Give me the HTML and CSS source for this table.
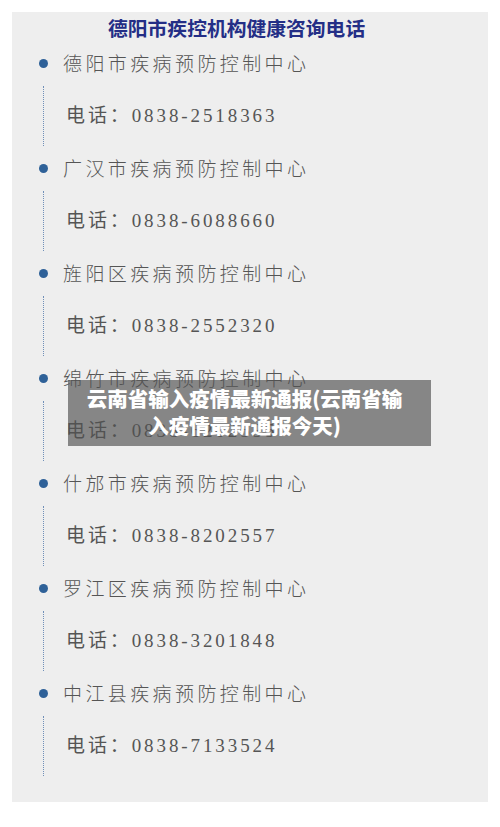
FILE: index.html
```html
<!DOCTYPE html>
<html lang="zh-CN">
<head>
  <meta charset="UTF-8">
  <meta name="viewport" content="width=device-width, initial-scale=1.0">
  <title>云南省输入疫情最新通报</title>
  <link rel="stylesheet" href="styles.css">
</head>
<body>
  <div class="panel">
    <h1 class="title">德阳市疾控机构健康咨询电话</h1>

    <div class="item">
      <div class="name"><span class="dot"></span>德阳市疾病预防控制中心</div>
      <div class="phone">电话：0838-2518363</div>
    </div>
    <div class="item">
      <div class="name"><span class="dot"></span>广汉市疾病预防控制中心</div>
      <div class="phone">电话：0838-6088660</div>
    </div>
    <div class="item">
      <div class="name"><span class="dot"></span>旌阳区疾病预防控制中心</div>
      <div class="phone">电话：0838-2552320</div>
    </div>
    <div class="item">
      <div class="name"><span class="dot"></span>绵竹市疾病预防控制中心</div>
      <div class="phone">电话：0838-6202535</div>
    </div>
    <div class="item">
      <div class="name"><span class="dot"></span>什邡市疾病预防控制中心</div>
      <div class="phone">电话：0838-8202557</div>
    </div>
    <div class="item">
      <div class="name"><span class="dot"></span>罗江区疾病预防控制中心</div>
      <div class="phone">电话：0838-3201848</div>
    </div>
    <div class="item">
      <div class="name"><span class="dot"></span>中江县疾病预防控制中心</div>
      <div class="phone">电话：0838-7133524</div>
    </div>

    <!-- 标题遮罩 -->
    <div class="caption">云南省输入疫情最新通报(云南省输<br>入疫情最新通报今天)</div>
  </div>
</body>
</html>
```

FILE: styles.css
```css
body {
  margin: 0;
  background-color: #ffffff;
  font-family: "Noto Sans CJK SC", sans-serif;
}

.panel {
  position: relative;
  margin: 12px;
  height: 790px;
  padding: 4px 0 0 27px;
  box-sizing: border-box;
  background-color: #eeeeee;
}

.title {
  margin: 0 0 10px 0;
  padding-left: 69px;
  font-size: 19.8px;
  line-height: 24px;
  font-weight: 700;
  color: #242e86;
}

.item {
  margin-bottom: 9px;
}

.name {
  display: flex;
  align-items: center;
  height: 26px;
  font-size: 19px;
  line-height: 26px;
  color: #555555;
  letter-spacing: 3.4px;
  font-weight: 300;
}

.dot {
  width: 9px;
  height: 9px;
  border-radius: 50%;
  background-color: #2f6198;
  margin-right: 15px;
  flex-shrink: 0;
}

.phone {
  margin: 10px 0 0 4px;
  padding: 17px 0 17px 22px;
  border-left: 1px dotted #6f8fb8;
  font-family: "Liberation Serif", "Noto Sans CJK SC", serif;
  font-size: 19px;
  line-height: 26px;
  color: #555555;
  letter-spacing: 2.9px;
}

.caption {
  position: absolute;
  left: 56px;
  top: 368px;
  width: 363px;
  height: 66px;
  box-sizing: border-box;
  padding: 5px 10px 0 0;
  background-color: rgba(80, 80, 80, 0.66);
  color: #ffffff;
  font-size: 20.5px;
  line-height: 27px;
  font-weight: 900;
  text-align: center;
}
```
